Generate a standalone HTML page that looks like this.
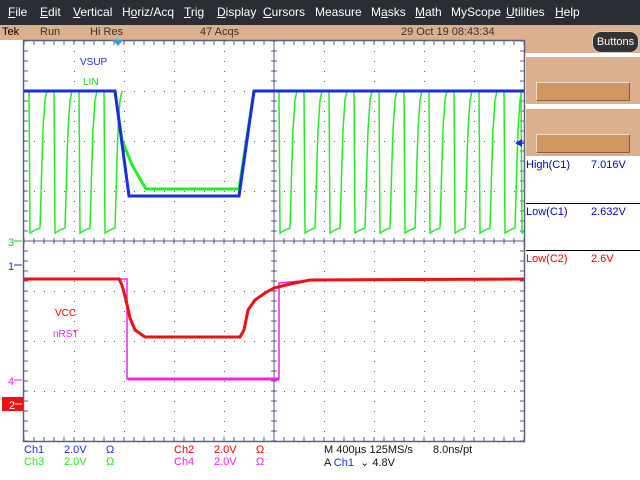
<!DOCTYPE html>
<html><head><meta charset="utf-8"><style>
body{margin:0;width:640px;height:480px;background:#fff;position:relative;overflow:hidden;font-family:"Liberation Sans",sans-serif;font-size:11px}
.a{position:absolute;white-space:nowrap}
#menu{position:absolute;left:0;top:0;width:640px;height:25px;background:#2a2d33}
#menu span{position:absolute;top:5px;color:#fff;font-size:12px}
#stat{position:absolute;left:0;top:25px;width:640px;height:15px;background:#dbb08c}
</style></head><body>
<div id="menu">
<span style="left:8px"><u>F</u>ile</span><span style="left:40px"><u>E</u>dit</span><span style="left:73px"><u>V</u>ertical</span><span style="left:122px">H<u>o</u>riz/Acq</span><span style="left:184px"><u>T</u>rig</span><span style="left:217px"><u>D</u>isplay</span><span style="left:263px"><u>C</u>ursors</span><span style="left:315px">Measure</span><span style="left:371px">M<u>a</u>sks</span><span style="left:415px"><u>M</u>ath</span><span style="left:451px">MyScope</span><span style="left:506px"><u>U</u>tilities</span><span style="left:555px"><u>H</u>elp</span>
</div>
<div id="stat"></div>
<div class="a" style="left:2px;top:26px;font-size:11px">Tek</div>
<div class="a" style="left:40px;top:26px;color:#333">Run</div>
<div class="a" style="left:90px;top:26px;color:#333">Hi Res</div>
<div class="a" style="left:200px;top:26px;color:#333">47 Acqs</div>
<div class="a" style="left:401px;top:26px;color:#333">29 Oct 19 08:43:34</div>
<div class="a" style="left:524px;top:40px;width:116px;height:13px;background:#dbb08c"></div>
<div class="a" style="left:592px;top:31px;width:45px;height:20px;background:#333;border-radius:9px;border:1px solid #ccc;color:#fff;font-size:11px;text-align:center;line-height:20px">Buttons</div>
<div class="a" style="left:526px;top:57px;width:114px;height:47px;background:#dbb08c"></div>
<div class="a" style="left:536px;top:82px;width:92px;height:17px;background:#cf965f;border:1px solid #f3dcc4;border-right-color:#8a6040;border-bottom-color:#8a6040"></div>
<div class="a" style="left:526px;top:109px;width:114px;height:47px;background:#dbb08c"></div>
<div class="a" style="left:536px;top:134px;width:92px;height:17px;background:#cf965f;border:1px solid #f3dcc4;border-right-color:#8a6040;border-bottom-color:#8a6040"></div>
<div class="a" style="left:526px;top:159px;color:#00c">High(C1)</div><div class="a" style="left:591px;top:159px;color:#00c">7.016V</div>
<div class="a" style="left:526px;top:203px;width:114px;height:1px;background:#000"></div>
<div class="a" style="left:526px;top:206px;color:#00c">Low(C1)</div><div class="a" style="left:591px;top:206px;color:#00c">2.632V</div>
<div class="a" style="left:526px;top:250px;width:114px;height:1px;background:#000"></div>
<div class="a" style="left:526px;top:253px;color:#e00">Low(C2)</div><div class="a" style="left:591px;top:253px;color:#e00">2.6V</div>

<svg id="g" class="a" style="left:0;top:0" width="640" height="480" xmlns="http://www.w3.org/2000/svg">
<rect x="23.5" y="40.5" width="501" height="401" fill="none" stroke="#5a6080" stroke-width="1.5"/>
<line x1="274" y1="41" x2="274" y2="441" stroke="#5a6080"/>
<line x1="24" y1="241" x2="524" y2="241" stroke="#5a6080"/>
<g id="ticks" stroke="#5a6080"></g>
<g id="dots" fill="#5a6080"></g>
<polygon points="113,40 123,40 118,46" fill="#29a0e0"/>
<g id="green" fill="none" stroke="#22ee22" stroke-width="1.5"></g>
<polyline fill="none" stroke="#22ee22" stroke-width="3" points="115,91 122,140 132,165 146,189 239,189 254,91"/>
<polyline fill="none" stroke="#1a2ee0" stroke-width="3" points="24,91 115,91 129,196 239,196 254,91 524,91"/>
<polyline fill="none" stroke="#ee22ee" stroke-width="1.5" points="24,279 127,279 127,379 279,379 279,283 300,281"/>
<line x1="128" y1="379" x2="279" y2="379" stroke="#ee22ee" stroke-width="3"/>
<polyline fill="none" stroke="#ee1111" stroke-width="3" points="24,279 119,279 122,285 126,300 130,318 135,330 145,337 240,337 244,330 248,310 255,300 265,293 274,288 290,284 310,280 524,279"/>
<polygon points="515,143 522,139 522,147" fill="#1a2ee0"/><line x1="518" y1="143" x2="524" y2="143" stroke="#1a2ee0" stroke-width="1.5"/>
<text x="8" y="246" fill="#22cc22" font-size="11" font-family="Liberation Sans">3</text><line x1="14" y1="241" x2="22" y2="241" stroke="#22cc22"/>
<text x="8" y="270" fill="#1a2ee0" font-size="11" font-family="Liberation Sans">1</text><line x1="14" y1="265" x2="22" y2="265" stroke="#1a2ee0"/>
<text x="8" y="385" fill="#ee22ee" font-size="11" font-family="Liberation Sans">4</text><line x1="14" y1="380" x2="22" y2="380" stroke="#ee22ee"/>
<rect x="2" y="397" width="21" height="14" fill="#ee1111"/>
<text x="9" y="409" fill="#fff" font-size="11" font-family="Liberation Sans">2</text><line x1="15" y1="404" x2="22" y2="404" stroke="#fff"/>
</svg>
<div class="a" style="left:80px;top:57px;color:#1a2ee0;font-size:10px">VSUP</div>
<div class="a" style="left:83px;top:77px;color:#22cc22;font-size:10px">LIN</div>
<div class="a" style="left:55px;top:308px;color:#e00;font-size:10px">VCC</div>
<div class="a" style="left:53px;top:329px;color:#ee22ee;font-size:10px">nRST</div>

<div class="a" style="left:24px;top:444px;color:#1a2ee0">Ch1</div><div class="a" style="left:64px;top:444px;color:#1a2ee0">2.0V</div><div class="a" style="left:106px;top:444px;color:#1a2ee0">Ω</div>
<div class="a" style="left:24px;top:456px;color:#22ee22">Ch3</div><div class="a" style="left:64px;top:456px;color:#22ee22">2.0V</div><div class="a" style="left:106px;top:456px;color:#22ee22">Ω</div>
<div class="a" style="left:174px;top:444px;color:#e00">Ch2</div><div class="a" style="left:214px;top:444px;color:#e00">2.0V</div><div class="a" style="left:256px;top:444px;color:#e00">Ω</div>
<div class="a" style="left:174px;top:456px;color:#ee22ee">Ch4</div><div class="a" style="left:214px;top:456px;color:#ee22ee">2.0V</div><div class="a" style="left:256px;top:456px;color:#ee22ee">Ω</div>
<div class="a" style="left:324px;top:444px;color:#111">M 400µs 125MS/s</div><div class="a" style="left:433px;top:444px;color:#111">8.0ns/pt</div>
<div class="a" style="left:324px;top:456px;color:#111">A <span style="color:#1a2ee0">Ch1</span> &nbsp;⌄ 4.8V</div>
<script>
var ns="http://www.w3.org/2000/svg";
function el(p,t,a){var e=document.createElementNS(ns,t);for(var k in a)e.setAttribute(k,a[k]);p.appendChild(e);}
var T=document.getElementById('ticks'),D=document.getElementById('dots'),G=document.getElementById('green');
for(var x=24;x<=524;x+=10){
 el(T,'line',{x1:x,y1:41,x2:x,y2:45});el(T,'line',{x1:x,y1:437,x2:x,y2:441});
 el(T,'line',{x1:x,y1:238,x2:x,y2:244});}
for(var y=41;y<=441;y+=10){el(T,'line',{x1:24,y1:y,x2:28,y2:y});el(T,'line',{x1:520,y1:y,x2:524,y2:y});el(T,'line',{x1:271,y1:y,x2:277,y2:y});}
for(var gx=74;gx<524;gx+=50)for(var y=41;y<441;y+=10)el(D,'rect',{x:gx,y:y,width:1,height:1});
for(var gy=91;gy<441;gy+=50)for(var x=24;x<524;x+=10)el(D,'rect',{x:x,y:gy,width:1,height:1});
function pulse(x0){var p=[[x0,91],[x0+1,233],[x0+6,230],[x0+11,228],[x0+12,195],[x0+13,160],[x0+14,130],[x0+16,100],[x0+18,91]];
 el(G,'polyline',{points:p.map(function(q){return q.join(',')}).join(' ')});}
[29,54,79,104,279,304,329,354,379,404,429,454,479,504].forEach(pulse);
el(G,'polyline',{points:"521,91 522,233 524,232"});
</script>
</body></html>
